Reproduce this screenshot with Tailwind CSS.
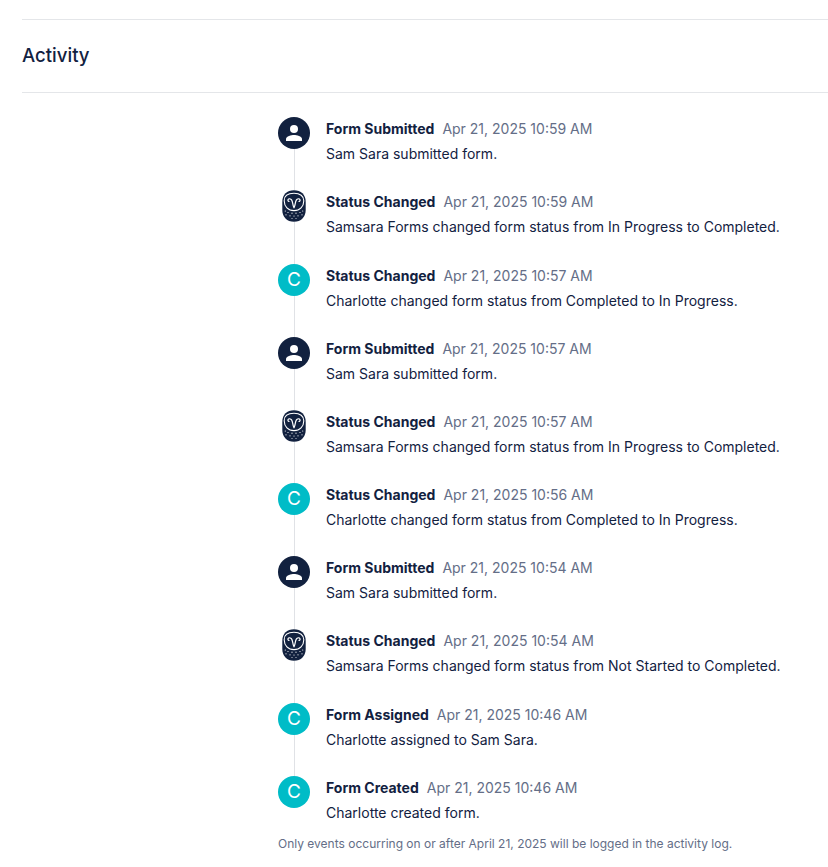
<!DOCTYPE html>
<html lang="en">
<head>
  <meta charset="UTF-8">
  <meta name="viewport" content="width=device-width, initial-scale=1.0">
  <title>Activity</title>
  <script src="https://cdn.jsdelivr.net/npm/@tailwindcss/browser@4"></script>
</head>
<body class="bg-white font-['Inter',sans-serif] text-[#12213f]">
  <!-- Icon symbols -->
  <svg class="hidden">
    <symbol id="icon-user" viewBox="0 0 32 32">
      <circle cx="16" cy="16" r="16" fill="#12213f" />
      <circle cx="16" cy="12" r="4" fill="#fff" />
      <path d="M8 24v-2c0-2.700 5.300-4 8-4s8 1.300 8 4v2z" fill="#fff" />
    </symbol>
    <symbol id="icon-owl" viewBox="0 0 32 32">
      <path d="M4.300 12C4.300 4.500 9 .3 16 .3S27.700 4.500 27.700 12v8c0 7.200-4.700 11.700-11.700 11.700S4.300 27.200 4.300 20z" fill="#12213f" />
      <g fill="none" stroke="#fff" stroke-linecap="round" stroke-linejoin="round">
        <path d="M16 3.300c-6 0-9.800 2.700-9.800 7.400 0 5.800 4 9.900 9.800 9.900s9.800-4.100 9.800-9.900c0-4.700-3.800-7.400-9.800-7.400z" stroke-width="1.100" />
        <path d="M11 11.500c-2-.8-1-3 1-2.700 3.200.4 2 5.300 4 9 2-3.700.8-8.600 4-9 2-.3 3 1.900 1 2.700" stroke-width="1.200" />
      </g>
      <g fill="#fff">
        <circle cx="7.300" cy="21" r=".6" /><circle cx="24.700" cy="21" r=".6" />
        <circle cx="10" cy="22.500" r=".6" /><circle cx="14" cy="23.200" r=".6" />
        <circle cx="18" cy="23.200" r=".6" /><circle cx="22" cy="22.500" r=".6" />
        <circle cx="8" cy="24.800" r=".6" /><circle cx="12" cy="25.800" r=".6" />
        <circle cx="16" cy="26" r=".6" /><circle cx="20" cy="25.800" r=".6" /><circle cx="24" cy="24.800" r=".6" />
        <circle cx="14" cy="28.500" r=".5" /><circle cx="18" cy="28.500" r=".5" />
      </g>
    </symbol>
  </svg>

  <main class="pl-[22px] pt-[19px]">
    <header class="flex h-[74px] items-center border-y border-[#e4e6e9] pb-0.5">
      <h2 class="text-[18.600px] font-medium leading-6">Activity</h2>
    </header>

    <section class="pl-64 pt-[24.200px]">
      <ul id="activity"></ul>
      <p class="text-xs leading-4 text-[#646e87]">Only events occurring on or after April 21, 2025 will be logged in the activity log.</p>
    </section>
  </main>

  <script>
    const events = [
      ['user', 'Form Submitted', '10:59', 'Sam Sara submitted form.'],
      ['owl', 'Status Changed', '10:59', 'Samsara Forms changed form status from In Progress to Completed.'],
      ['c', 'Status Changed', '10:57', 'Charlotte changed form status from Completed to In Progress.'],
      ['user', 'Form Submitted', '10:57', 'Sam Sara submitted form.'],
      ['owl', 'Status Changed', '10:57', 'Samsara Forms changed form status from In Progress to Completed.'],
      ['c', 'Status Changed', '10:56', 'Charlotte changed form status from Completed to In Progress.'],
      ['user', 'Form Submitted', '10:54', 'Sam Sara submitted form.'],
      ['owl', 'Status Changed', '10:54', 'Samsara Forms changed form status from Not Started to Completed.'],
      ['c', 'Form Assigned', '10:46', 'Charlotte assigned to Sam Sara.'],
      ['c', 'Form Created', '10:46', 'Charlotte created form.'],
    ];

    const avatar = (type) => type === 'c'
      ? '<div class="flex size-8 items-center justify-center rounded-full bg-[#00bcc7] pb-px text-[19px] leading-none text-white">C</div>'
      : `<svg class="size-8"><use href="#icon-${type}" /></svg>`;

    document.getElementById('activity').innerHTML = events.map(([type, title, time, text]) => `
      <li class="group flex h-[73.175px] gap-4 last:h-[60px]">
        <div class="flex flex-col items-center">
          ${avatar(type)}
          <div class="w-px flex-1 bg-[#e0e2e6] group-last:hidden"></div>
        </div>
        <div class="pt-0.5 text-sm leading-5">
          <div class="flex gap-2"><span class="font-bold">${title}</span><span class="text-[#646e87]">Apr 21, 2025 ${time} AM</span></div>
          <p class="mt-[5px]">${text}</p>
        </div>
      </li>`).join('');
  </script>
</body>
</html>
